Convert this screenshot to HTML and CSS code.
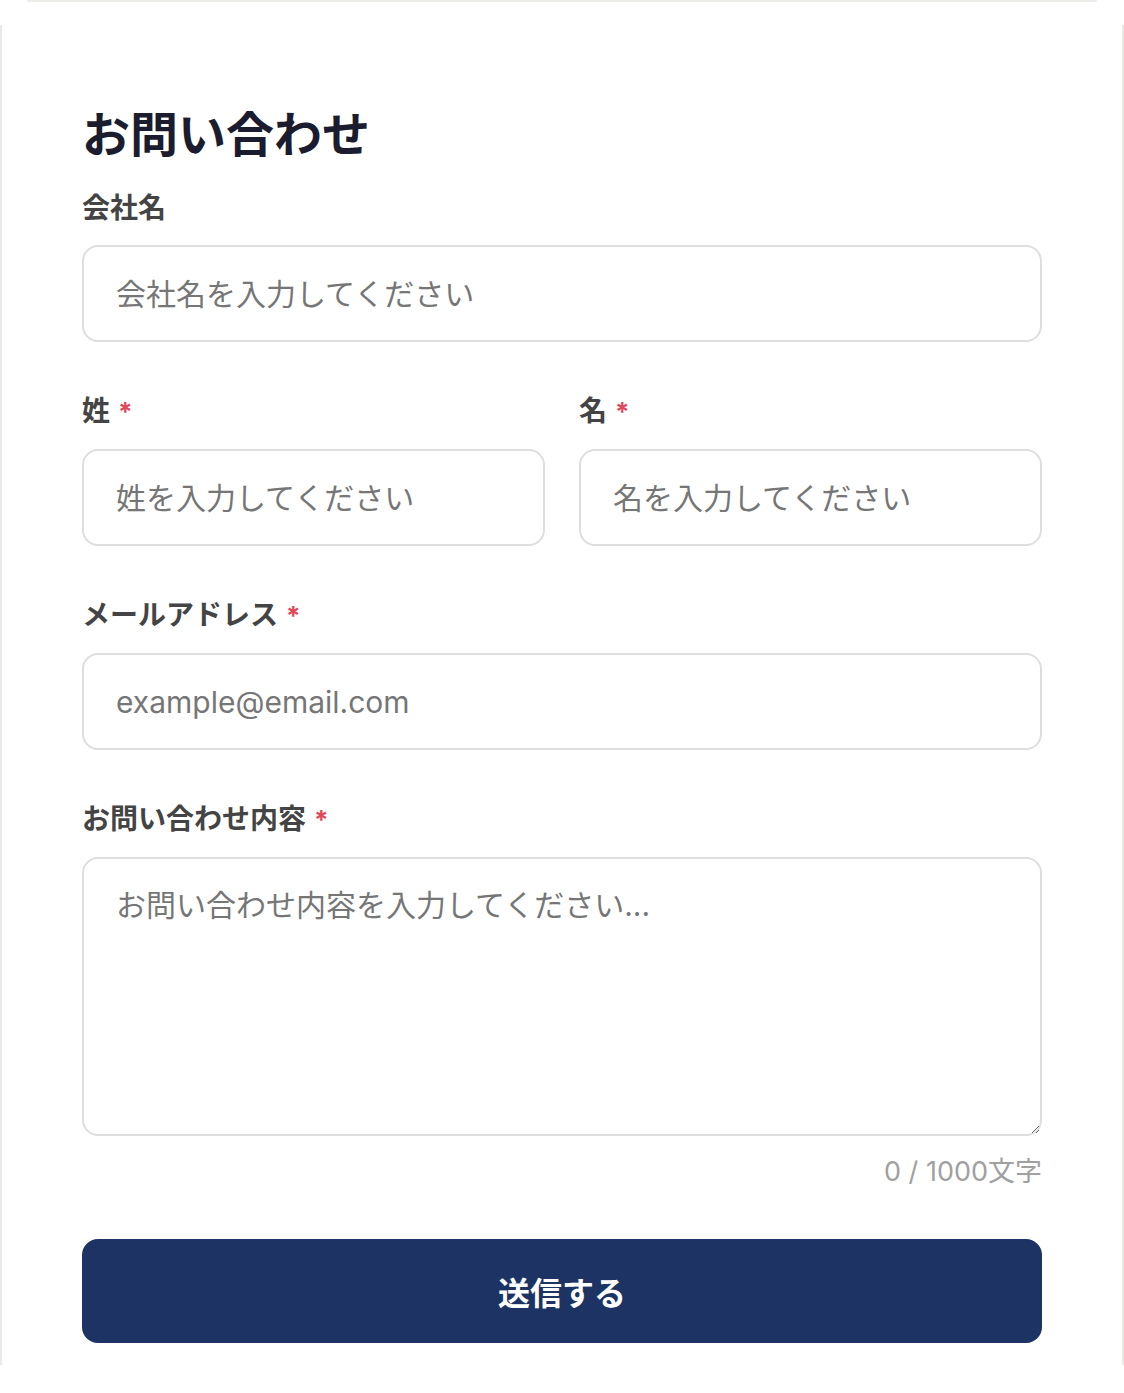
FILE: index.html
```html
<!DOCTYPE html>
<html lang="ja">
<head>
    <meta charset="UTF-8">
    <meta name="viewport" content="width=device-width, initial-scale=1.0">
    <title>お問い合わせ</title>
    <link rel="stylesheet" href="styles.css">
</head>
<body>
    <div class="top-edge"></div>

    <div class="contact-card">
        <h1 class="contact-title">お問い合わせ</h1>

        <form class="contact-form">
            <div class="form-group">
                <label class="form-label" for="company">会社名</label>
                <input class="form-input" id="company" type="text" placeholder="会社名を入力してください">
            </div>

            <div class="form-row">
                <div class="form-group">
                    <label class="form-label" for="last-name">姓<span class="required">*</span></label>
                    <input class="form-input" id="last-name" type="text" placeholder="姓を入力してください">
                </div>
                <div class="form-group">
                    <label class="form-label" for="first-name">名<span class="required">*</span></label>
                    <input class="form-input" id="first-name" type="text" placeholder="名を入力してください">
                </div>
            </div>

            <div class="form-group">
                <label class="form-label" for="email">メールアドレス<span class="required">*</span></label>
                <input class="form-input" id="email" type="email" placeholder="example@email.com">
            </div>

            <div class="form-group">
                <label class="form-label" for="message">お問い合わせ内容<span class="required">*</span></label>
                <textarea class="form-input form-textarea" id="message" maxlength="1000" placeholder="お問い合わせ内容を入力してください..."></textarea>
                <div class="char-count"><span id="count">0</span> / 1000文字</div>
            </div>

            <button class="submit-btn" type="button">送信する</button>
        </form>
    </div>

    <script>
    document.addEventListener('DOMContentLoaded', () => {
        const message = document.getElementById('message');
        const count = document.getElementById('count');

        message.addEventListener('input', () => {
            count.textContent = message.value.length;
        });
    });
    </script>
</body>
</html>
```

FILE: styles.css
```css
body {
    margin: 0;
    background-color: #ffffff;
    font-family: Inter, "Noto Sans CJK JP", sans-serif;
}

.top-edge {
    height: 2px;
    margin: 0 27px;
    background-color: #edece8;
    border-radius: 0 0 4px 4px;
}

.contact-card {
    margin-top: 23px;
    height: 1340px;
    box-sizing: border-box;
    padding: 76px 80px 0;
    border-left: 2px solid #ebeae5;
    border-right: 2px solid #ebeae5;
}

.contact-title {
    margin: 0 0 19px;
    font-size: 48px;
    line-height: 1.4;
    font-weight: 700;
    color: #1b1d2e;
}

.contact-form {
    display: flex;
    flex-direction: column;
    gap: 48px;
}

.form-row {
    display: grid;
    grid-template-columns: minmax(0, 1fr) minmax(0, 1fr);
    gap: 34px;
}

.form-group {
    display: flex;
    flex-direction: column;
    min-width: 0;
}

.form-label {
    margin-bottom: 16px;
    font-size: 28px;
    line-height: 42px;
    font-weight: 700;
    color: #444444;
}

.required {
    margin-left: 8px;
    font-size: 26px;
    color: #e0485a;
}

.form-input {
    width: 100%;
    min-width: 0;
    height: 97px;
    box-sizing: border-box;
    padding: 0 32px;
    border: 2px solid #dedede;
    border-radius: 16px;
    font-family: Inter, "Noto Sans CJK JP", sans-serif;
    font-size: 30px;
    color: #333333;
    background-color: #ffffff;
    outline: none;
}

.form-input::placeholder {
    color: #767676;
}

.form-textarea {
    height: 279px;
    padding: 24px 32px;
    line-height: 1.5;
    resize: vertical;
}

.char-count {
    margin-top: 16px;
    text-align: right;
    font-size: 27px;
    line-height: 39px;
    color: #a0a0a0;
}

.submit-btn {
    height: 104px;
    border: none;
    border-radius: 16px;
    background-color: #1c3364;
    color: #ffffff;
    font-family: Inter, "Noto Sans CJK JP", sans-serif;
    font-size: 32px;
    font-weight: 700;
    cursor: pointer;
}
```
